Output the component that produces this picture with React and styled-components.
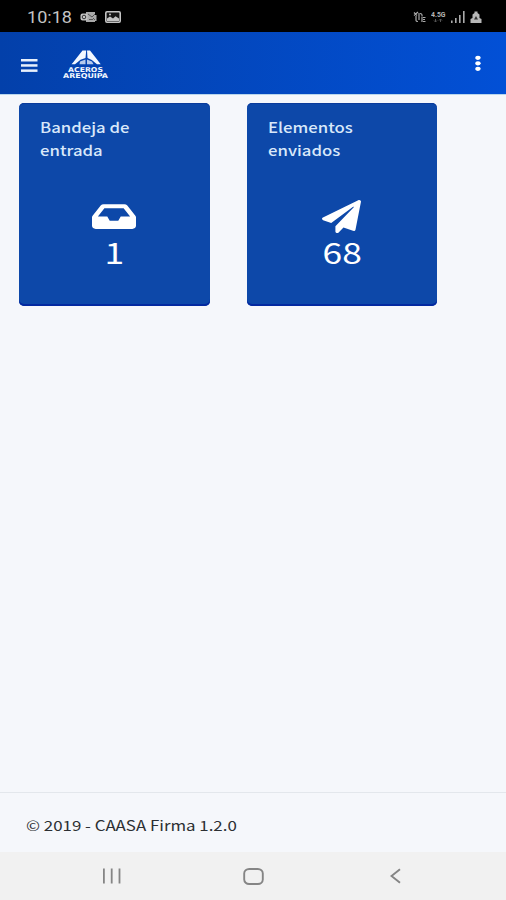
import React from 'react';
import styled, { createGlobalStyle } from 'styled-components';
import { FaInbox, FaPaperPlane } from 'react-icons/fa';

const GlobalStyle = createGlobalStyle`
  * {
    box-sizing: border-box;
  }

  body {
    margin: 0;
    font-family: 'Noto Sans CJK SC', 'Noto Sans', sans-serif;
  }
`;

const Screen = styled.div`
  display: flex;
  flex-direction: column;
  width: 506px;
  height: 900px;
  overflow: hidden;
  background: #f5f7fb;
`;

const StatusBar = styled.div`
  display: flex;
  align-items: center;
  justify-content: space-between;
  flex: none;
  height: 32px;
  padding: 2px 24px 0 27px;
  background: #000;
`;

const StatusGroup = styled.div`
  display: flex;
  align-items: center;
  gap: ${(props) => props.$gap}px;
`;

const Clock = styled.span`
  width: 45px;
  padding-top: 1px;
  font-family: Roboto, sans-serif;
  font-size: 15.7px;
  line-height: 20px;
  color: #c4c4c4;
  white-space: nowrap;
  transform: scaleX(1.15);
  transform-origin: left;
`;

const Header = styled.header`
  display: flex;
  align-items: center;
  flex: none;
  height: 62px;
  padding: 3px 24px 0 21px;
  background: linear-gradient(90deg, #0340aa, #0250d6);
`;

const IconButton = styled.button`
  display: flex;
  padding: 0;
  border: none;
  background: none;
`;

const Brand = styled.div`
  flex: 1;
  height: 32px;
  margin-left: 25px;
`;

const Main = styled.main`
  display: flex;
  align-items: flex-start;
  flex: 1;
  gap: 37px;
  padding: 8px 19px;
  border-top: 1px solid #b9d6ec;
`;

const Card = styled.section`
  display: flex;
  flex-direction: column;
  width: 190.5px;
  height: 203px;
  padding: 12px 21px 0;
  border-radius: 5px;
  background: #0d48a9;
  box-shadow: inset 0 -2px 0 #0329a0, inset 0 1px 0 #0a3b9b;
`;

const CardTitle = styled.h2`
  width: 110px;
  height: 83px;
  margin: 0;
  font-size: 14.3px;
  font-weight: 500;
  line-height: 23px;
  color: #d9e8fa;
  transform: scaleX(1.17);
  transform-origin: left;
`;

const CardIcon = styled.div`
  display: flex;
  align-items: center;
  justify-content: center;
  height: 36px;
  margin-right: 1px;
  color: #fff;

  svg {
    width: ${(props) => props.$width}px;
    height: 33px;
  }
`;

const Count = styled.div`
  margin-top: -2px;
  font-size: 29.5px;
  line-height: 38px;
  text-align: center;
  color: #fff;
  transform: scaleX(1.2);
`;

const Footer = styled.footer`
  flex: none;
  height: 60px;
  padding: 21px 26px;
  border-top: 1px solid #e3e7ec;
`;

const Copyright = styled.p`
  margin: 0;
  font-size: 14px;
  line-height: 22px;
  color: #2c2f33;
  white-space: nowrap;
  transform: scaleX(1.205);
  transform-origin: left;
`;

const NavBar = styled.nav`
  display: flex;
  align-items: center;
  justify-content: space-between;
  flex: none;
  height: 48px;
  padding: 0 105px 0 103px;
  background: #f1f1f1;
`;

const NotificationIcons = () => (
  <>
    <svg width="17" height="12" viewBox="0 0 17 12">
      <path d="M6 1h9v3h1.5v6H15v1H6z" fill="#aaa" />
      <rect x="0.5" y="2.5" width="7" height="7" rx="2" fill="#c4c4c4" />
      <circle cx="4" cy="6" r="1.8" fill="none" stroke="#333" />
      <path d="M8 3l4 3 3-3M9 8.5h4M13 7l2 2" fill="none" stroke="#555" />
    </svg>
    <svg width="16" height="12" viewBox="0 0 16 12">
      <rect x="0.8" y="0.8" width="14.4" height="10.4" rx="1.2" fill="#151515" stroke="#c4c4c4" strokeWidth="1.6" />
      <path d="M2 10V7.5l3-2 3 2 2.5-2.2L14 7.5V10z" fill="#c4c4c4" />
      <circle cx="5" cy="3.5" r="1" fill="#c4c4c4" />
    </svg>
  </>
);

const SystemIcons = () => (
  <>
    <svg width="13" height="12" viewBox="0 0 13 12" fill="none" stroke="#aaa">
      <path d="M1 1.5l3 3M1 4.5l4-3.5M3 5v4.5q0 1 2 1M6 2v7M7 2.5q2.5 0 2 3M9 6v5M10 6.5h2.5M10 8.5h2M10 10.5h2.5" strokeWidth="1.2" />
    </svg>
    <svg width="15" height="13" viewBox="0 0 15 13" fill="#b5b5b5" fontFamily="Roboto, sans-serif" fontWeight="700">
      <text x="0" y="6" fontSize="7" textLength="14.5" lengthAdjust="spacingAndGlyphs">4.5G</text>
      <path d="M4.5 8v3M3 9.5L4.5 11 6 9.5M9.5 11V8M8 9.5L9.5 8 11 9.5" fill="none" stroke="#555" />
    </svg>
    <svg width="14" height="12" viewBox="0 0 14 12" fill="#aaa">
      <rect x="0" y="9.5" width="1.6" height="2.5" />
      <rect x="4" y="7" width="1.6" height="5" />
      <rect x="8" y="4" width="1.6" height="8" />
      <rect x="12" y="0" width="1.6" height="12" />
    </svg>
    <svg width="12" height="12" viewBox="0 0 12 12">
      <path d="M4.5 0.5h3v1.5l2 1.5V7l2 1V12H.5V8l2-1V3.5l2-1.5z" fill="#b8b8b8" />
      <path d="M6 5L4 8.5h4z" fill="#333" />
    </svg>
  </>
);

const Logo = () => (
  <svg width="46" height="32" viewBox="0 0 46 32" fill="#f3f8ff">
    <path d="M19.5 1.5h3.7L22.5 9l-5 1.8L12 15.2H8.5q2-2 3.5-4.2z" />
    <path d="M24 1.5h3l7.5 9.5q1.5 2.2 3.2 4.2H34L28.8 11 24.5 9z" />
    <path d="M17 12.5l5.5-2v4.7h-6zM24 10.5l5 2 1.5 2.7H24z" opacity="0.75" />
    <g fontFamily="'DejaVu Sans', sans-serif" fontWeight="700">
      <text x="5" y="22.7" fontSize="6.6" textLength="35" lengthAdjust="spacingAndGlyphs">ACEROS</text>
      <text x="0" y="29" fontSize="6.6" textLength="45" lengthAdjust="spacingAndGlyphs">AREQUIPA</text>
    </g>
  </svg>
);

const cards = [
  { title: 'Bandeja de entrada', count: 1, icon: FaInbox, iconWidth: 44 },
  { title: 'Elementos enviados', count: 68, icon: FaPaperPlane, iconWidth: 39 },
];

const App = () => {
  return (
    <Screen>
      <GlobalStyle />
      <StatusBar>
        <StatusGroup $gap={8}>
          <Clock>10:18</Clock>
          <NotificationIcons />
        </StatusGroup>
        <StatusGroup $gap={5}>
          <SystemIcons />
        </StatusGroup>
      </StatusBar>
      <Header>
        <IconButton aria-label="Menu">
          <svg width="17" height="14" viewBox="0 0 17 14" fill="#e8f0fc">
            <rect y="1" width="16.5" height="2.5" />
            <rect y="6.2" width="16.5" height="2.5" />
            <rect y="11.4" width="16.5" height="2.5" />
          </svg>
        </IconButton>
        <Brand>
          <Logo />
        </Brand>
        <IconButton aria-label="Opciones">
          <svg width="7" height="20" viewBox="0 0 7 20" fill="#fff">
            <ellipse cx="3" cy="2.8" rx="2.7" ry="2.1" />
            <ellipse cx="3" cy="8.3" rx="2.7" ry="2.1" />
            <ellipse cx="3" cy="13.8" rx="2.7" ry="2.1" />
          </svg>
        </IconButton>
      </Header>
      <Main>
        {cards.map(({ title, count, icon: Icon, iconWidth }) => (
          <Card key={title}>
            <CardTitle>{title}</CardTitle>
            <CardIcon $width={iconWidth}>
              <Icon preserveAspectRatio="none" />
            </CardIcon>
            <Count>{count}</Count>
          </Card>
        ))}
      </Main>
      <Footer>
        <Copyright>© 2019 - CAASA Firma 1.2.0</Copyright>
      </Footer>
      <NavBar>
        <svg width="18" height="16" viewBox="0 0 18 16" fill="#858585">
          <rect x="0" y="0.5" width="1.8" height="15" />
          <rect x="7.8" y="0.5" width="1.8" height="15" />
          <rect x="15.6" y="0.5" width="1.8" height="15" />
        </svg>
        <svg width="25" height="17" viewBox="0 0 25 17" fill="none" stroke="#858585" strokeWidth="1.9">
          <rect x="1.2" y="1" width="18.6" height="15" rx="5" ry="4.5" />
        </svg>
        <svg width="11" height="16" viewBox="0 0 11 16" fill="none" stroke="#858585" strokeWidth="1.9">
          <path d="M10 1.2L1.5 8l8.5 6.8" />
        </svg>
      </NavBar>
    </Screen>
  );
};

export default App;
